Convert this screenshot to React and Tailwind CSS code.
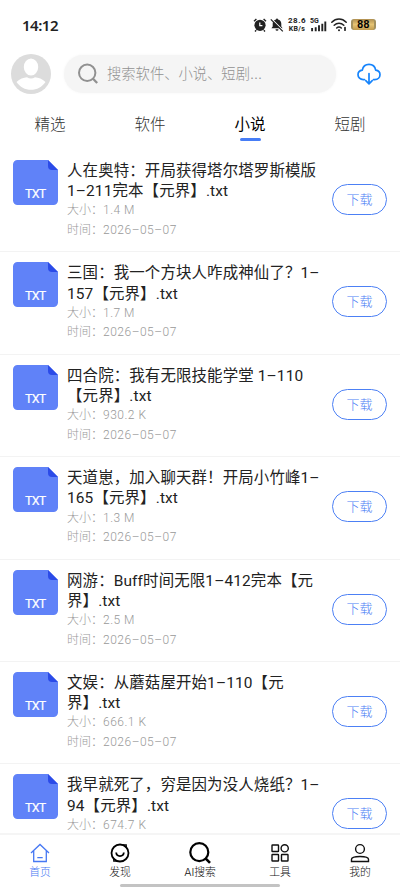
import React, { useState } from 'react';

const books = [
  { lines: ['人在奥特：开局获得塔尔塔罗斯模版', '1–211完本【元界】.txt'], size: '1.4 M', date: '2026–05–07' },
  { lines: ['三国：我一个方块人咋成神仙了？1–', '157【元界】.txt'], size: '1.7 M', date: '2026–05–07' },
  { lines: ['四合院：我有无限技能学堂 1–110', '【元界】.txt'], size: '930.2 K', date: '2026–05–07' },
  { lines: ['天道崽，加入聊天群！开局小竹峰1–', '165【元界】.txt'], size: '1.3 M', date: '2026–05–07' },
  { lines: ['网游：Buff时间无限1–412完本【元', '界】.txt'], size: '2.5 M', date: '2026–05–07' },
  { lines: ['文娱：从蘑菇屋开始1–110【元', '界】.txt'], size: '666.1 K', date: '2026–05–07' },
  { lines: ['我早就死了，穷是因为没人烧纸？1–', '94【元界】.txt'], size: '674.7 K' },
];

const tabs = ['精选', '软件', '小说', '短剧'];

const StatusBar = () => (
  <div className="flex h-[49px] shrink-0 items-center pl-[22px] pr-6 text-[#222]">
    <span className="text-[15px] leading-5 font-semibold tracking-[-0.5px] font-['Noto_Sans']">14:12</span>
    <div className="ml-auto flex items-center">
      <svg className="h-[14px] w-[14px]" viewBox="0 0 14 14">
        <circle cx="7" cy="7.3" r="5.6" fill="#222" />
        <path d="M1 3.2 3.4 1M13 3.2 10.6 1M3.2 12.2 2 13.4M10.8 12.2 12 13.4" stroke="#222" strokeWidth="1.4" />
        <path d="M6.8 4.4v3.2h2.6" stroke="#fff" strokeWidth="1.2" fill="none" />
      </svg>
      <svg className="ml-[3px] h-[14px] w-[14px]" viewBox="0 0 14 14">
        <path d="M7 .6a1 1 0 0 1 1 1c2.1.5 3.3 2 3.3 4.2v2.8l1.3 1.7H1.4l1.3-1.7V5.8C2.7 3.6 3.9 2.1 6 1.6a1 1 0 0 1 1-1zM5.5 11.2h3a1.5 1.5 0 0 1-3 0z" fill="#222" />
        <path d="M1.8 1.2 13.3 12.7" stroke="#fff" strokeWidth="1.2" />
        <path d="M.8 1.4 12.8 13.4" stroke="#222" strokeWidth="1.2" />
      </svg>
      <div className="ml-[4px] flex w-[18px] flex-col items-center font-['Roboto'] font-bold">
        <span className="text-[8px] leading-[8px] tracking-[0.5px] whitespace-nowrap">28.6</span>
        <span className="text-[7px] leading-[8px] tracking-[0.4px] whitespace-nowrap">KB/s</span>
      </div>
      <svg className="ml-[4px] h-[15px] w-[17px]" viewBox="0 0 17 15">
        <text x="0" y="5.8" fontSize="7" fontWeight="700" fontFamily="Roboto" fill="#222">5G</text>
        <path d="M2.1 14.2v-3.2M5.7 14.2v-4M9 14.2V8.2M12.3 14.2V6.7M15.3 14.2V4.5" stroke="#222" strokeWidth="1.9" />
      </svg>
      <svg className="ml-[4px] h-[14px] w-[16px]" viewBox="0 0 16 14" fill="none" stroke="#222" strokeWidth="1.5" strokeLinecap="round">
        <path d="M.8 4.2C5-.1 11-.1 15.2 4.2M3.2 7.2c2.7-2.7 6.9-2.7 9.6 0M5.7 10c1.3-1.2 3.3-1.2 4.6 0" />
        <path d="M8 12.3h.01" strokeWidth="2" />
        <path d="M14 9.6v2.6" strokeWidth="1.7" />
      </svg>
      <span className="ml-[4px] flex h-[11px] w-[25px] items-center justify-center rounded-[3px] border-x-2 border-[#a3915f] bg-linear-to-b from-[#b08f50] via-[#e6c474] to-[#c19b4e] font-['Liberation_Sans'] text-[10.5px] leading-none font-bold tracking-[0.4px] text-black">
        88
      </span>
    </div>
  </div>
);

const SearchHeader = () => (
  <div className="flex h-[50px] shrink-0 items-center pl-[11px] pr-[19px]">
    <svg className="h-10 w-10 shrink-0" viewBox="0 0 40 40">
      <circle cx="20" cy="20" r="20" fill="#dcdcdc" />
      <ellipse cx="20" cy="13" rx="7.2" ry="8.6" fill="#fff" />
      <path d="M5.5 28c3.200-3.200 7-4.400 10.500-4.800 2.500 1.600 5.500 1.600 8 0 3.500.4 7.300 1.600 10.500 4.800-3.500 5-8.500 7.800-14.500 7.800S9 33 5.500 28z" fill="#fff" />
    </svg>
    <div className="ml-[13px] flex h-[38px] w-[272px] items-center rounded-full bg-[#f5f5f5] pl-[13px] shadow-[0_0_3px_#f5f5f5]">
      <svg className="h-[22px] w-[22px]" viewBox="0 0 22 22" fill="none" stroke="#919191" strokeWidth="2">
        <circle cx="10.2" cy="9.8" r="8.2" />
        <path d="m16 15.8 4.2 4.2" strokeWidth="2.3" />
      </svg>
      <span className="ml-2 text-[14.3px] font-light text-[#929292]">搜索软件、小说、短剧...</span>
    </div>
    <svg className="ml-auto h-6 w-6 shrink-0" viewBox="0 0 24 24" fill="none" stroke="#1684fc" strokeWidth="1.7" strokeLinecap="round" strokeLinejoin="round">
      <path d="M7.5 17.6H6.2C3.2 17.6 1 15.5 1 12.8c0-2.5 1.8-4.4 4.3-4.7C6 4.6 8.7 2.4 12 2.4s6 2.2 6.7 5.7c2.500.3 4.300 2.200 4.300 4.700 0 2.700-2.200 4.800-5.200 4.800h-1.300" />
      <path d="M12 11.5v10M8.8 18.7l3.2 3.1 3.2-3.1" />
    </svg>
  </div>
);

const TxtIcon = () => (
  <svg className="h-[45px] w-[45px] shrink-0" viewBox="0 0 45 45">
    <path d="M4.5 0H35l10 10v30.5a4.5 4.5 0 0 1-4.5 4.5h-36A4.5 4.5 0 0 1 0 40.5v-36A4.5 4.5 0 0 1 4.5 0z" fill="#6082f8" />
    <path d="M35 0l10 10h-6a4 4 0 0 1-4-4z" fill="#2b4be8" />
    <text x="22.3" y="38" textAnchor="middle" fontSize="12.5" fontWeight="400" fontFamily="Roboto" letterSpacing="-0.7" fill="#fff" stroke="#fff" strokeWidth="0.2">TXT</text>
  </svg>
);

const BookRow = ({ book }) => (
  <div className="flex h-[102.4px] shrink-0 border-b border-[#f3f3f3] pt-[10px] pl-[13px] pr-[13px]">
    <TxtIcon />
    <div className="ml-[9px] flex-1 whitespace-nowrap font-[Roboto,'Noto_Sans_CJK_SC',sans-serif]">
      <div className="pt-px text-[15.45px] leading-[20.2px] tracking-[0.13px] text-[#222]">
        {book.lines.map((line) => (
          <p key={line}>{line}</p>
        ))}
      </div>
      <p className="text-[12px] leading-[19.6px] font-light text-[#999]">
        大小：<span className="tracking-[0.5px]">{book.size}</span>
      </p>
      {book.date && (
        <p className="text-[12px] leading-[19.6px] font-light text-[#999]">
          时间：<span className="tracking-[0.5px]">{book.date}</span>
        </p>
      )}
    </div>
    <button className="mt-[24px] h-[31px] w-[55px] shrink-0 rounded-full border border-[#4c80f5] text-[13px] font-light text-[#4c80f5]">下载</button>
  </div>
);

const HomeIcon = () => (
  <svg className="h-5 w-5" viewBox="0 0 20 20" fill="none" stroke="#4678f3" strokeWidth="1.3">
    <path d="M1 10 10 1.5l9 8.5M3.7 8v10.5h12.6V8M7.3 14.7h5.4" />
  </svg>
);

const DiscoverIcon = () => (
  <svg className="h-5 w-5" viewBox="0 0 20 20" fill="none" stroke="#000" strokeWidth="1.8">
    <circle cx="10" cy="10" r="8.5" />
    <path d="M13 1.9h3.2v3M7 18.2H3.8v-3" strokeWidth="1.3" />
    <path d="M6.2 9.5c.3 4.7 7.3 4.7 7.6 0" />
  </svg>
);

const SearchIcon = () => (
  <svg className="h-[22px] w-[22px]" viewBox="0 0 22 22" fill="none" stroke="#000" strokeWidth="2.2">
    <circle cx="10.3" cy="10.2" r="9" />
    <path d="m16.5 16.3 4.5 4.5" strokeWidth="2.6" />
  </svg>
);

const ToolsIcon = () => (
  <svg className="h-5 w-5" viewBox="0 0 20 20" fill="none" stroke="#111" strokeWidth="1.4">
    <rect x="2" y="2" width="6.5" height="6.5" rx=".5" />
    <circle cx="14.7" cy="5.3" r="3.6" />
    <rect x="2" y="11.5" width="6.5" height="6.5" rx=".5" />
    <rect x="11.5" y="11.5" width="6.5" height="6.5" rx=".5" />
  </svg>
);

const MineIcon = () => (
  <svg className="h-5 w-5" viewBox="0 0 20 20" fill="none" stroke="#111" strokeWidth="1.4">
    <circle cx="10" cy="6" r="4.4" />
    <path d="M1.5 18.5v-2.2c0-1.7 3.5-2.8 8.5-2.8s8.5 1.1 8.5 2.8v2.2z" />
  </svg>
);

const navItems = [
  { label: '首页', Icon: HomeIcon },
  { label: '发现', Icon: DiscoverIcon },
  { label: 'AI搜索', Icon: SearchIcon },
  { label: '工具', Icon: ToolsIcon },
  { label: '我的', Icon: MineIcon },
];

function App() {
  const [activeTab, setActiveTab] = useState('小说');

  return (
    <div className="flex h-[889px] w-[400px] flex-col overflow-hidden bg-white font-[Inter,'Noto_Sans_CJK_SC',sans-serif]">
      <StatusBar />
      <SearchHeader />
      <div className="grid h-[51px] shrink-0 grid-cols-4">
        {tabs.map((tab) => (
          <button key={tab} onClick={() => setActiveTab(tab)} className="flex flex-col items-center pt-[14px]">
            <span className={tab === activeTab ? 'text-[15.5px] leading-6 text-black' : 'text-[15.5px] leading-6 font-light text-[#333]'}>{tab}</span>
            {tab === activeTab && <span className="mt-px h-[3px] w-[21px] rounded-full bg-[#467df6]" />}
          </button>
        ))}
      </div>

      <div className="flex min-h-0 flex-1 flex-col overflow-hidden">
        {books.map((book) => (
          <BookRow key={book.lines[0]} book={book} />
        ))}
      </div>

      <div className="flex h-[56px] shrink-0 flex-col border-t-2 border-[#f5f5f5] bg-white">
        <div className="grid h-[49px] grid-cols-5">
          {navItems.map(({ label, Icon }) => (
            <button key={label} className="flex flex-col items-center pt-[7px]">
              <span className="flex h-[22px] items-center"><Icon /></span>
              <span className={label === '首页' ? 'mt-px text-[10.8px] leading-4 font-light text-[#4678f3]' : 'mt-px text-[10.8px] leading-4 font-light text-[#111]'}>{label}</span>
            </button>
          ))}
        </div>
        <div className="mx-auto h-[3px] w-[160px] rounded-full bg-[#c3c3c3]" />
      </div>
    </div>
  );
}

export default App;
